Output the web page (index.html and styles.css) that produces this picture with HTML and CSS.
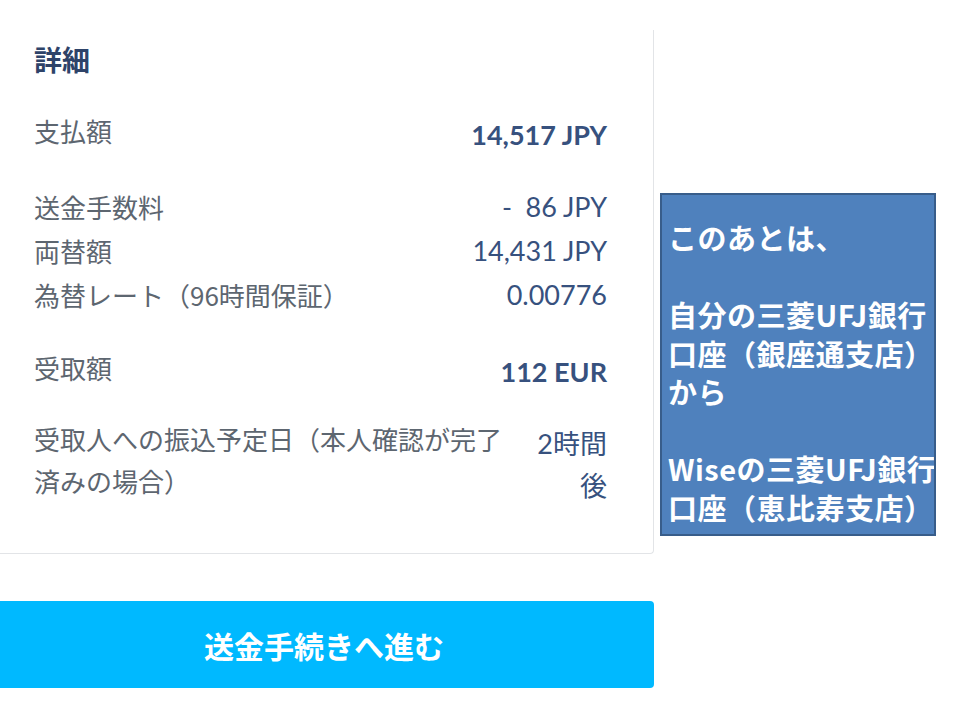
FILE: index.html
```html
<!DOCTYPE html>
<html lang="ja">
<head>
  <meta charset="UTF-8" />
  <meta name="viewport" content="width=device-width, initial-scale=1.0"/>
  <title>詳細</title>
  <link rel="stylesheet" href="styles.css">
</head>
<body>
  <div class="page">
    <section class="details">
      <h2 class="details-title">詳細</h2>

      <div class="row row-strong">
        <div class="label">支払額</div>
        <div class="value">14,517 JPY</div>
      </div>

      <div class="group">
        <div class="row">
          <div class="label">送金手数料</div>
          <div class="value">-&ensp;86 JPY</div>
        </div>
        <div class="row">
          <div class="label">両替額</div>
          <div class="value">14,431 JPY</div>
        </div>
        <div class="row">
          <div class="label">為替レート（96時間保証）</div>
          <div class="value">0.00776</div>
        </div>
      </div>

      <div class="row row-strong">
        <div class="label">受取額</div>
        <div class="value">112 EUR</div>
      </div>

      <div class="row row-eta">
        <div class="label">受取人への振込予定日（本人確認が完了済みの場合）</div>
        <div class="value">2時間後</div>
      </div>
    </section>

    <button class="btn-next">送金手続きへ進む</button>
  </div>

  <aside class="note">
    <p>このあとは、</p>
    <p>自分の三菱UFJ銀行<br>口座（銀座通支店）<br>から</p>
    <p>Wiseの三菱UFJ銀行<br>口座（恵比寿支店）<br>へ</p>
  </aside>
</body>
</html>
```

FILE: styles.css
```css
* {
  box-sizing: border-box;
}
body {
  margin: 0;
  background: #fff;
  font-family: Lato, "Noto Sans CJK JP", sans-serif;
  color: #37517e;
}
.page {
  width: 660px;
  margin-left: -6px;
  padding-top: 30px;
}
.details {
  border-right: 1px solid #e2e4e7;
  border-bottom: 1px solid #e2e4e7;
  border-radius: 0 0 4px 0;
  padding: 10px 46px 46px 40px;
}
.details-title {
  margin: 0 0 30px;
  font-family: "Noto Sans CJK JP", sans-serif;
  font-size: 28px;
  line-height: 39px;
  font-weight: 700;
  color: #2e4369;
}
.row {
  display: flex;
  justify-content: space-between;
  align-items: flex-start;
  gap: 24px;
  line-height: 44px;
}
.label {
  font-family: "Noto Sans CJK JP", sans-serif;
  font-size: 26px;
  color: #5d6670;
}
.value {
  font-size: 27px;
  text-align: right;
  white-space: nowrap;
}
.row-strong .value {
  padding-top: 4px;
  font-weight: 700;
}
.group {
  margin: 28px 0 29px;
}
.row-eta {
  margin-top: 24px;
  line-height: 42px;
}
.row-eta .label {
  flex: 1;
}
.row-eta .value {
  width: 78px;
  flex: none;
  padding-top: 5px;
  white-space: normal;
}
.btn-next {
  display: block;
  width: 660px;
  height: 87px;
  margin-top: 47px;
  border: none;
  border-radius: 4px;
  background: #00b9ff;
  color: #fff;
  font-family: "Noto Sans CJK JP", sans-serif;
  font-size: 30px;
  font-weight: 700;
}
/* PowerPoint style callout laid over the screenshot */
.note {
  position: absolute;
  left: 660px;
  top: 193px;
  width: 276px;
  height: 343px;
  padding: 23px 0 0 6px;
  background: #4f81bd;
  border: 2px solid #385d8a;
  overflow: hidden;
  color: #fff;
  font-family: "Noto Sans CJK JP", sans-serif;
  font-size: 29px;
  font-weight: 700;
  letter-spacing: 0.5px;
  line-height: 38.5px;
  white-space: nowrap;
}
.note p {
  margin: 0 0 38.5px;
}
```
